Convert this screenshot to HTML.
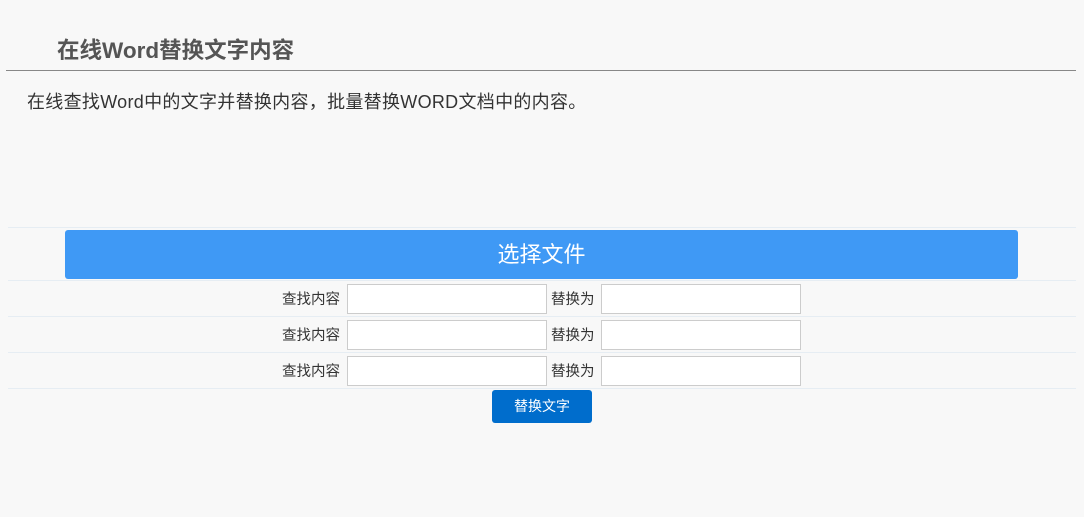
<!DOCTYPE html>
<html><head><meta charset="utf-8"><style>
body{margin:0;width:1084px;height:517px;background:#f8f8f8;font-family:"Liberation Sans","Noto Sans CJK SC",sans-serif;position:relative;overflow:hidden;color:#333}
.a{position:absolute}
.t{left:57px;top:36px;font-size:22.5px;font-weight:bold;color:#555;line-height:30px;white-space:nowrap}
.hl{left:6px;top:70px;width:1070px;height:1px;background:#888}
.d{left:27px;top:89px;font-size:18px;line-height:26px;color:#333;white-space:nowrap;letter-spacing:0.3px}
.sep{left:8px;width:1068px;height:1px;background:#e6edf3}
.btn{left:65px;top:230px;width:953px;height:49px;background:#3f99f5;border-radius:3px;color:#fff;font-size:22px;text-align:center;line-height:49px}
.lb{font-size:14.5px;line-height:30px;color:#333;white-space:nowrap}
.in{width:198px;height:28px;background:#fff;border:1px solid #ccc}
.b2{left:492px;top:390px;width:100px;height:33px;background:#006dcc;border-radius:3px;color:#fff;font-size:14px;text-align:center;line-height:33px}
</style></head><body>
<div class="a t">在线Word替换文字内容</div>
<div class="a hl"></div>
<div class="a d">在线查找Word中的文字并替换内容，批量替换WORD文档中的内容。</div>
<div class="a sep" style="top:227px"></div>
<div class="a btn">选择文件</div>
<div class="a sep" style="top:280px"></div>
<div class="a sep" style="top:316px"></div>
<div class="a sep" style="top:352px"></div>
<div class="a sep" style="top:388px"></div>
<div class="a lb" style="left:282px;top:285px">查找内容</div><div class="a in" style="left:347px;top:284px"></div>
<div class="a lb" style="left:551px;top:285px">替换为</div><div class="a in" style="left:601px;top:284px"></div>
<div class="a lb" style="left:282px;top:321px">查找内容</div><div class="a in" style="left:347px;top:320px"></div>
<div class="a lb" style="left:551px;top:321px">替换为</div><div class="a in" style="left:601px;top:320px"></div>
<div class="a lb" style="left:282px;top:357px">查找内容</div><div class="a in" style="left:347px;top:356px"></div>
<div class="a lb" style="left:551px;top:357px">替换为</div><div class="a in" style="left:601px;top:356px"></div>
<div class="a b2">替换文字</div>
</body></html>
